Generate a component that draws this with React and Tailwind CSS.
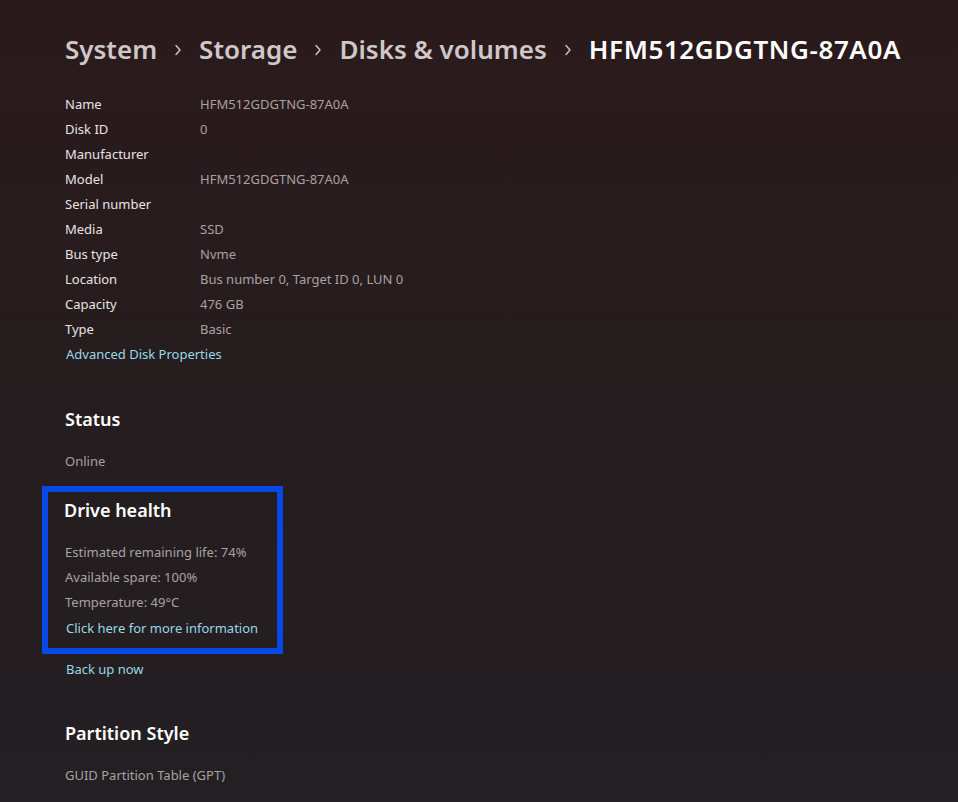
import React from "react";

const FONT = { fontFamily: '"Noto Sans", "Open Sans", sans-serif' };

function Chevron() {
  return (
    <svg width="8" height="12" viewBox="0 0 8 12" className="mx-[17px] mt-[2px]">
      <path d="M2 1.5 L6 6 L2 10.5" fill="none" stroke="#cfc7c8" strokeWidth="1.4" strokeLinecap="round" strokeLinejoin="round" />
    </svg>
  );
}

const rows = [
  ["Name", "HFM512GDGTNG-87A0A"],
  ["Disk ID", "0"],
  ["Manufacturer", ""],
  ["Model", "HFM512GDGTNG-87A0A"],
  ["Serial number", ""],
  ["Media", "SSD"],
  ["Bus type", "Nvme"],
  ["Location", "Bus number 0, Target ID 0, LUN 0"],
  ["Capacity", "476 GB"],
  ["Type", "Basic"],
];

export default function App() {
  return (
    <div
      className="w-[958px] h-[802px] overflow-hidden bg-gradient-to-b from-[#2b1a1c] via-[#251d1f] to-[#231f22] pl-[65px] pt-[29px]"
      style={FONT}
    >
      <div className="flex items-center h-[40px] text-[26px] font-semibold">
        <span className="text-[#cfc7c8]">System</span>
        <Chevron />
        <span className="text-[#cfc7c8]">Storage</span>
        <Chevron />
        <span className="text-[#cfc7c8]">Disks &amp; volumes</span>
        <Chevron />
        <span className="text-white tracking-[0.6px]">HFM512GDGTNG-87A0A</span>
      </div>

      <div className="mt-[23px] text-[13px]">
        {rows.map(([k, v]) => (
          <div key={k} className="grid grid-cols-[135px_1fr] h-[25px] items-center">
            <span className="text-[#e8e3e3]">{k}</span>
            <span className="text-[#a9a2a3]">{v}</span>
          </div>
        ))}
        <div className="h-[25px] flex items-center pl-[1px] text-[#9ad8e8]">Advanced Disk Properties</div>
      </div>

      <div className="mt-[37px] h-[30px] flex items-center text-[18px] font-semibold text-white">Status</div>
      <div className="mt-[15px] h-[25px] flex items-center text-[13px] text-[#a9a2a3]">Online</div>

      <div className="mt-[12px] -ml-[23px] w-[241px] h-[168px] border-[6px] border-[#0848e6] pl-[16px] pt-[4px]">
        <div className="h-[28px] flex items-center text-[18px] font-semibold text-white">Drive health</div>
        <div className="mt-[16px] text-[13px] pl-[1px]">
          <div className="h-[25px] flex items-center text-[#a9a2a3]">Estimated remaining life: 74%</div>
          <div className="h-[25px] flex items-center text-[#a9a2a3]">Available spare: 100%</div>
          <div className="h-[25px] flex items-center text-[#a9a2a3]">Temperature: 49°C</div>
          <div className="mt-[1px] h-[25px] flex items-center text-[#9ad8e8] pl-[1px]">Click here for more information</div>
        </div>
      </div>

      <div className="mt-[3px] h-[25px] flex items-center pl-[1px] text-[13px] text-[#9ad8e8]">Back up now</div>

      <div className="mt-[36px] h-[30px] flex items-center text-[18px] font-semibold text-white">Partition Style</div>
      <div className="mt-[15px] h-[25px] flex items-center text-[13px] text-[#a9a2a3]">GUID Partition Table (GPT)</div>
    </div>
  );
}
